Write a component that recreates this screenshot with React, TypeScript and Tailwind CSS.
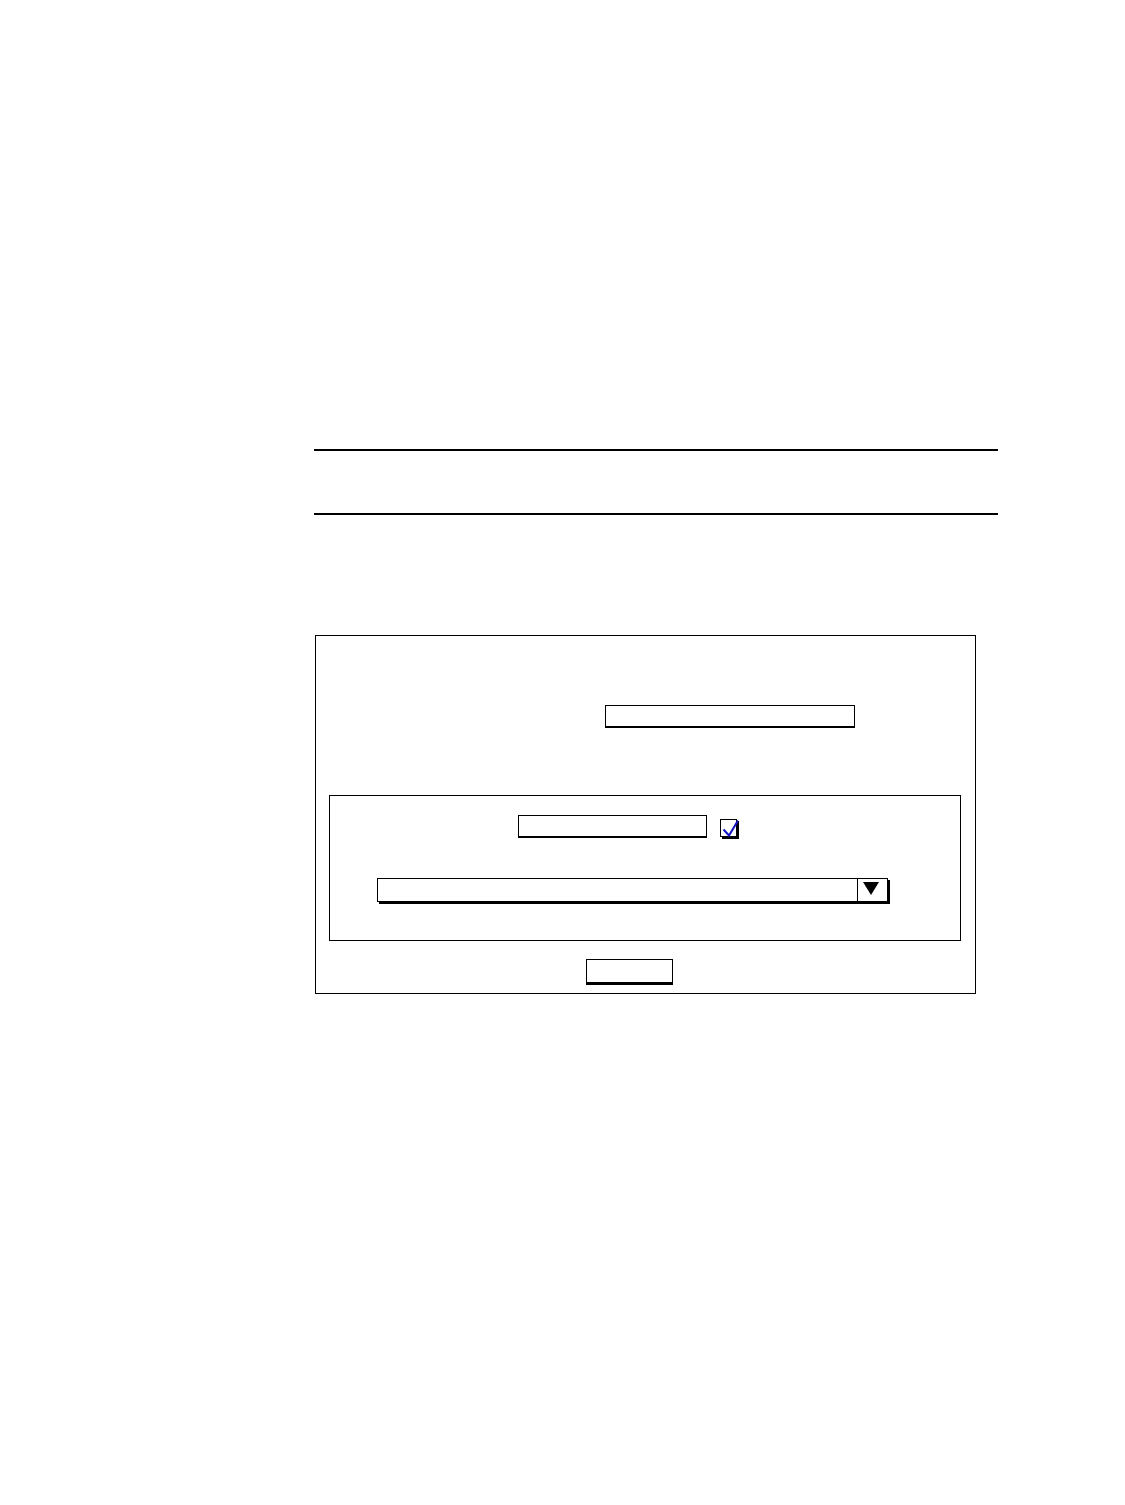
import { useState } from "react";

export default function App() {
  const [checked, setChecked] = useState(true);

  return (
    <main className="min-h-screen bg-white pt-[449px] pr-[127px] pb-20 pl-[314px] font-['Liberation_Sans',Arial,sans-serif] text-sm text-black">
      <header className="border-y-2 border-black py-[31px]" />

      <form
        className="mt-[120px] mr-[22px] ml-px border border-black pt-[69px] pr-3.5 pb-2 pl-[13px]"
        onSubmit={(event) => event.preventDefault()}
      >
        <div className="flex">
          <input
            type="text"
            aria-label="Name"
            className="ml-[276px] h-[23px] w-[250px] rounded-none border border-b-2 border-black bg-white px-1 outline-none"
          />
        </div>

        <fieldset className="mt-[67px] min-w-0 border border-black pt-[19px] pr-[72px] pb-[38px] pl-[47px]">
          <div className="flex items-start">
            <input
              type="text"
              aria-label="Value"
              className="ml-[141px] h-[23px] w-[189px] rounded-none border border-b-2 border-black bg-white px-1 outline-none"
            />
            <label className="relative mt-1 ml-[13px] block h-[18px] w-[17px]">
              <input
                type="checkbox"
                aria-label="Enabled"
                checked={checked}
                onChange={(event) => setChecked(event.target.checked)}
                className="block h-[18px] w-[17px] appearance-none rounded-none border border-black bg-white shadow-[2px_2px_0_0_#000]"
              />
              {checked && (
                <svg
                  aria-hidden="true"
                  viewBox="0 0 20 20"
                  className="pointer-events-none absolute top-0 left-0 h-5 w-5"
                >
                  <path
                    d="M3.5 10.5 9 16.5 18 1.5"
                    fill="none"
                    stroke="#1414c4"
                    strokeWidth="2"
                  />
                </svg>
              )}
            </label>
          </div>

          <div className="relative mt-10">
            <select
              aria-label="Selection"
              className="block h-6 w-full appearance-none rounded-none border border-black bg-white pr-8 pl-1 shadow-[2px_2px_0_0_#000,3px_2px_0_-1px_#000] outline-none"
            >
              <option value="" />
            </select>
            <span className="pointer-events-none absolute inset-y-0 right-0 w-[31px] border-l border-black">
              <svg
                aria-hidden="true"
                viewBox="0 0 16 13"
                className="mt-1 ml-[5px] h-[13px] w-4"
              >
                <path d="M0 0H16L8 13Z" fill="#000" />
              </svg>
            </span>
          </div>
        </fieldset>

        <button
          type="submit"
          aria-label="Submit"
          className="mt-[18px] ml-[257px] block h-[26px] w-[87px] border border-b-3 border-black bg-white"
        />
      </form>
    </main>
  );
}
